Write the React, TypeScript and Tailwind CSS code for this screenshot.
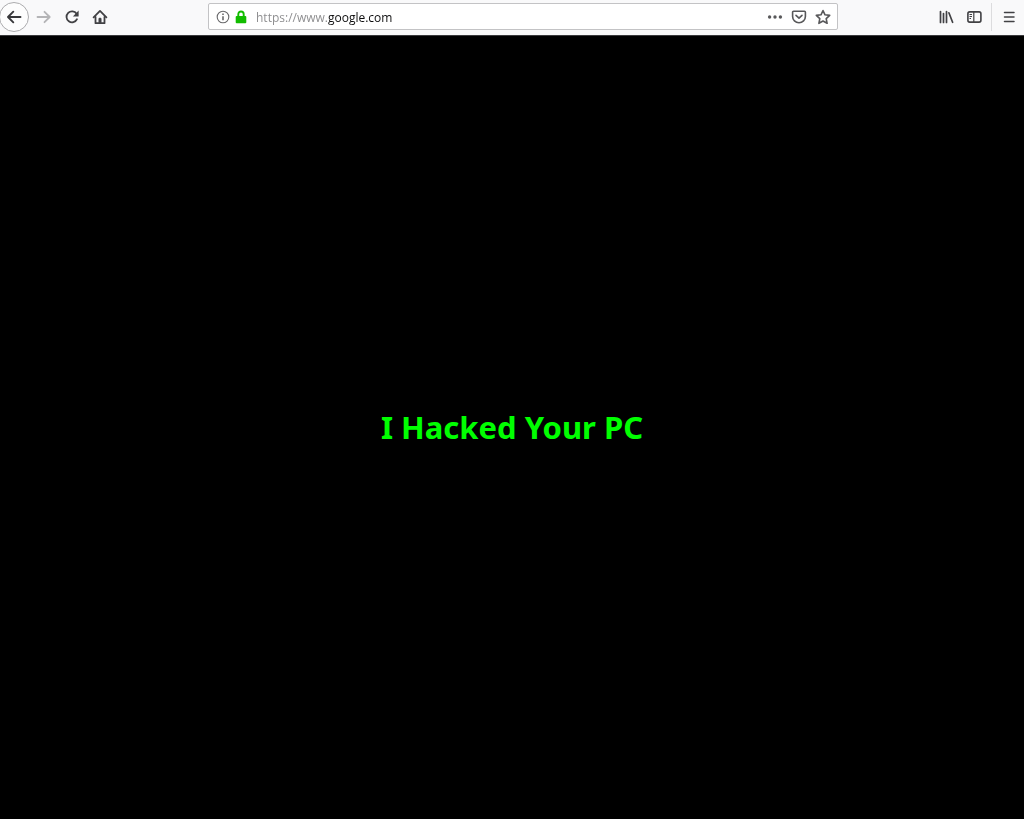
import React from 'react';

interface ToolbarButtonProps {
  title: string;
  disabled?: boolean;
  children: React.ReactNode;
}

const ToolbarButton: React.FC<ToolbarButtonProps> = ({ title, disabled, children }) => (
  <button
    type="button"
    title={title}
    aria-label={title}
    disabled={disabled}
    className="flex h-7 w-7 shrink-0 items-center justify-center text-[#414144] disabled:text-[#b4b4b6]"
  >
    {children}
  </button>
);

const PageButton: React.FC<ToolbarButtonProps> = ({ title, children }) => (
  <button
    type="button"
    title={title}
    aria-label={title}
    className="flex h-6 w-6 shrink-0 items-center justify-center text-[#58585a]"
  >
    {children}
  </button>
);

const AddressBar: React.FC = () => (
  <div className="flex h-[27px] min-w-0 flex-1 items-center rounded-xs border border-[#c3c3c5] bg-white pr-0.5 pl-[7px]">
    <button type="button" title="Site information" aria-label="Site information" className="flex shrink-0 items-center gap-1">
      <svg className="h-3.5 w-3.5" viewBox="0 0 14 14" fill="none">
        <circle cx="7" cy="7" r="5.8" stroke="#69696b" strokeWidth="1.1" />
        <path d="M6.2 6.2h1.6v4H6.2zM6.2 3.6h1.6v1.5H6.2z" fill="#69696b" />
      </svg>
      <svg className="h-3.5 w-3.5" viewBox="0 0 14 14" fill="none">
        <path d="M4.3 6.5V4.2a2.7 2.7 0 0 1 5.4 0v2.3" stroke="#12bc00" strokeWidth="1.9" />
        <rect x="1.7" y="6" width="10.6" height="7.2" rx="1" fill="#12bc00" />
      </svg>
    </button>
    {/* scheme and subdomain are dimmed, the domain itself is dark */}
    <input
      type="text"
      aria-label="Address"
      defaultValue="https://www.google.com"
      spellCheck={false}
      className="ml-2 h-6 min-w-0 flex-1 bg-[linear-gradient(to_right,#8a8a8c_71px,#0c0c0d_71px)] bg-clip-text pt-0.5 font-['Open_Sans','Noto_Sans',sans-serif] text-xs text-transparent caret-black outline-none"
    />
    <PageButton title="Page actions">
      <svg className="h-4 w-4" viewBox="0 0 16 16" fill="currentColor">
        <circle cx="2.6" cy="8" r="1.7" />
        <circle cx="8" cy="8" r="1.7" />
        <circle cx="13.4" cy="8" r="1.7" />
      </svg>
    </PageButton>
    <PageButton title="Save to Pocket">
      <svg className="h-4 w-4" viewBox="0 0 16 16" fill="none" stroke="currentColor" strokeWidth="1.6" strokeLinecap="round" strokeLinejoin="round">
        <path d="M2.6 2.3h10.8a1 1 0 0 1 1 1V7.5a6.4 6.2 0 0 1-12.8 0V3.3a1 1 0 0 1 1-1z" />
        <path d="M5 6.3l3 2.9 3-2.9" />
      </svg>
    </PageButton>
    <PageButton title="Bookmark this page">
      <svg className="h-4 w-4" viewBox="0 0 16 16" fill="none" stroke="currentColor" strokeWidth="1.6" strokeLinejoin="round">
        <path d="M8 1.5l2 4.3 4.7.6-3.5 3.2.9 4.7L8 12l-4.1 2.3.9-4.7L1.3 6.4 6 5.8z" />
      </svg>
    </PageButton>
  </div>
);

const App: React.FC = () => {
  return (
    <div className="flex min-h-screen flex-col bg-black">
      <header className="flex h-9 items-center border-b border-[#3a3a3c] bg-[#f9f9fa] pb-0.5">
        <nav aria-label="Navigation" className="flex items-center">
          <button type="button" title="Back" aria-label="Back" className="h-[30px] w-[30px] shrink-0 text-[#38383b]">
            <svg className="h-[30px] w-[30px] overflow-visible" viewBox="0 0 30 30" fill="none">
              <circle cx="14" cy="15" r="14.5" fill="#fdfdfd" stroke="#acacae" />
              <path d="M20.5 15H8.2M13.3 9.7L8 15l5.3 5.300" stroke="currentColor" strokeWidth="1.9" strokeLinecap="round" strokeLinejoin="round" />
            </svg>
          </button>
          <ToolbarButton title="Forward" disabled>
            <svg className="h-4 w-4" viewBox="0 0 16 16" fill="none" stroke="currentColor" strokeWidth="1.8" strokeLinecap="round" strokeLinejoin="round">
              <path d="M1.5 8h12M8.5 2.8L13.7 8l-5.2 5.2" />
            </svg>
          </ToolbarButton>
          <ToolbarButton title="Reload">
            <svg className="h-4 w-4" viewBox="0 0 16 16" fill="none">
              <path d="M12.6 4.8A5.500 5.500 0 1 0 13 10.2" stroke="currentColor" strokeWidth="1.8" strokeLinecap="round" />
              <path d="M14.6 1.6v5.3a.5.5 0 0 1-.5.5H8.900z" fill="currentColor" />
            </svg>
          </ToolbarButton>
          <ToolbarButton title="Home">
            <svg className="h-4 w-4" viewBox="0 0 16 16" fill="none" stroke="currentColor" strokeWidth="1.8" strokeLinecap="round" strokeLinejoin="round">
              <path d="M1.600 8.300L8 1.900l6.400 6.400" />
              <path d="M3.500 8v6.200h9V8" />
              <path d="M7 13.500V9.300h2v4.200z" fill="currentColor" strokeWidth="1" />
            </svg>
          </ToolbarButton>
        </nav>

        <div className="flex min-w-0 flex-1 px-[94px]">
          <AddressBar />
        </div>

        <div className="flex items-center">
          <ToolbarButton title="Library">
            <svg className="h-4 w-4" viewBox="0 0 16 16" fill="none" stroke="currentColor" strokeWidth="1.7" strokeLinecap="round">
              <path d="M2.500 2.500v11M5.500 4.500v9M8.500 2.500v11M10.900 3.800l3.700 9.500" />
            </svg>
          </ToolbarButton>
          <ToolbarButton title="Sidebars">
            <svg className="h-4 w-4" viewBox="0 0 16 16" fill="none" stroke="currentColor">
              <rect x="1.900" y="2.900" width="13" height="10.200" rx="1.800" strokeWidth="1.600" />
              <path d="M7.800 3v10" strokeWidth="1.200" />
              <path d="M3.500 5.500h2.500M3.500 7.500h2.500M3.500 9.500h1.500" strokeWidth="1" />
            </svg>
          </ToolbarButton>
          <div className="ml-[3px] flex border-l border-[#dcdcde] pl-1">
            <ToolbarButton title="Open menu">
              <svg className="h-4 w-4" viewBox="0 0 16 16" fill="none" stroke="currentColor" strokeWidth="1.500" strokeLinecap="round">
                <path d="M2.500 3.500h9.500M2.500 8h9.500M2.500 12.500h9.500" />
              </svg>
            </ToolbarButton>
          </div>
        </div>
      </header>

      <main className="flex flex-1 items-center justify-center">
        <h1 className="font-['Noto_Sans',sans-serif] text-[31px] font-bold text-[#00ff00]">I Hacked Your PC</h1>
      </main>
    </div>
  );
};

export default App;
